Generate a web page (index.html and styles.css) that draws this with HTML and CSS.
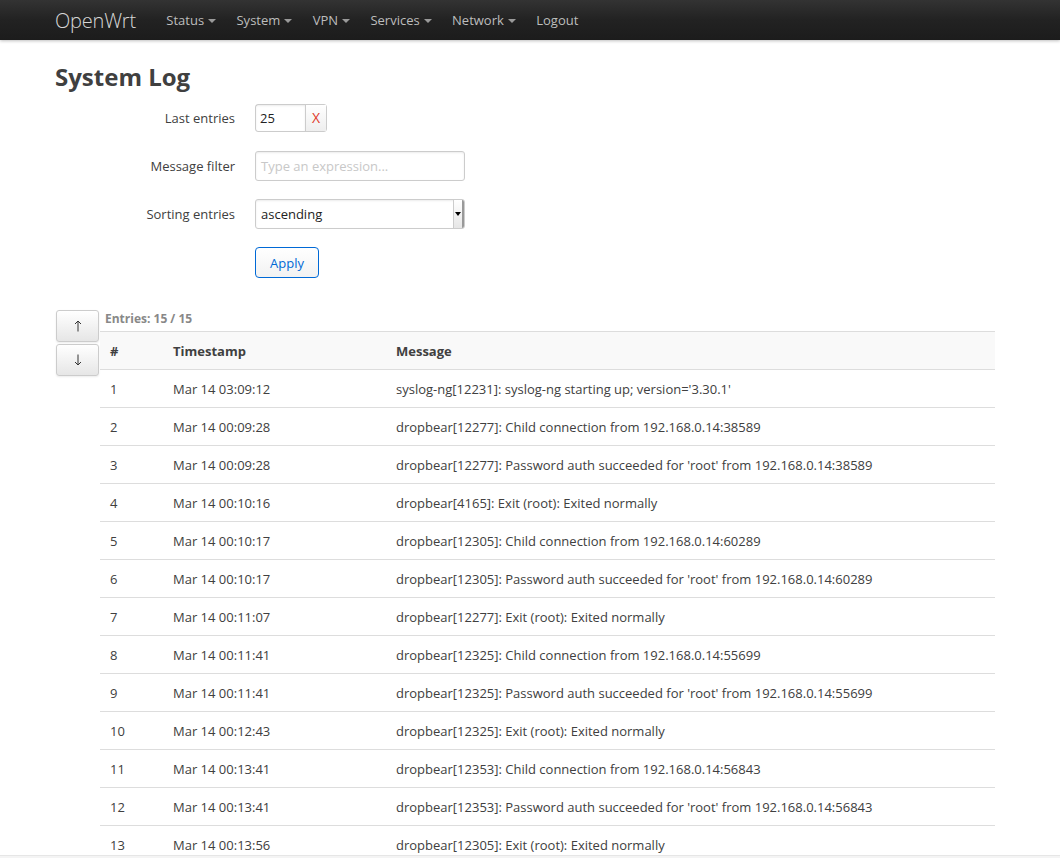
FILE: index.html
```html
<!DOCTYPE html>
<html>
<head>
<meta charset="utf-8">
<link rel="stylesheet" href="styles.css">
</head>
<body>
<header class="navbar">
  <div class="nav-inner">
    <a class="brand">OpenWrt</a>
    <ul class="menu">
      <li class="drop">Status</li>
      <li class="drop">System</li>
      <li class="drop">VPN</li>
      <li class="drop">Services</li>
      <li class="drop">Network</li>
      <li>Logout</li>
    </ul>
  </div>
</header>
<main class="container">
  <h2 class="title">System Log</h2>
  <div class="form">
    <div class="row">
      <label class="lbl">Last entries</label>
      <div class="ctrl">
        <div class="combo"><span class="num">25</span><span class="clear">X</span></div>
      </div>
    </div>
    <div class="row">
      <label class="lbl">Message filter</label>
      <div class="ctrl"><div class="textbox placeholder">Type an expression...</div></div>
    </div>
    <div class="row">
      <label class="lbl">Sorting entries</label>
      <div class="ctrl"><div class="select"><span>ascending</span><span class="sel-btn"><span class="arrow"></span></span></div></div>
    </div>
    <div class="row">
      <span class="lbl"></span>
      <div class="ctrl"><button class="apply">Apply</button></div>
    </div>
  </div>
  <div class="log">
    <div class="scroll-btns">
      <button class="sbtn"><svg width="8" height="12" viewBox="0 0 8 12"><path d="M4 11.5V1M1 4L4 1L7 4" fill="none" stroke="#333" stroke-width="1"/></svg></button>
      <button class="sbtn"><svg width="8" height="12" viewBox="0 0 8 12"><path d="M4 0.5V11M1 8L4 11L7 8" fill="none" stroke="#333" stroke-width="1"/></svg></button>
    </div>
    <div class="tablewrap">
      <div class="count">Entries: 15 / 15</div>
      <table class="tbl">
        <thead><tr><th class="c1">#</th><th class="c2">Timestamp</th><th>Message</th></tr></thead>
        <tbody>
          <tr><td>1</td><td>Mar 14 03:09:12</td><td>syslog-ng[12231]: syslog-ng starting up; version='3.30.1'</td></tr>
          <tr><td>2</td><td>Mar 14 00:09:28</td><td>dropbear[12277]: Child connection from 192.168.0.14:38589</td></tr>
          <tr><td>3</td><td>Mar 14 00:09:28</td><td>dropbear[12277]: Password auth succeeded for 'root' from 192.168.0.14:38589</td></tr>
          <tr><td>4</td><td>Mar 14 00:10:16</td><td>dropbear[4165]: Exit (root): Exited normally</td></tr>
          <tr><td>5</td><td>Mar 14 00:10:17</td><td>dropbear[12305]: Child connection from 192.168.0.14:60289</td></tr>
          <tr><td>6</td><td>Mar 14 00:10:17</td><td>dropbear[12305]: Password auth succeeded for 'root' from 192.168.0.14:60289</td></tr>
          <tr><td>7</td><td>Mar 14 00:11:07</td><td>dropbear[12277]: Exit (root): Exited normally</td></tr>
          <tr><td>8</td><td>Mar 14 00:11:41</td><td>dropbear[12325]: Child connection from 192.168.0.14:55699</td></tr>
          <tr><td>9</td><td>Mar 14 00:11:41</td><td>dropbear[12325]: Password auth succeeded for 'root' from 192.168.0.14:55699</td></tr>
          <tr><td>10</td><td>Mar 14 00:12:43</td><td>dropbear[12325]: Exit (root): Exited normally</td></tr>
          <tr><td>11</td><td>Mar 14 00:13:41</td><td>dropbear[12353]: Child connection from 192.168.0.14:56843</td></tr>
          <tr><td>12</td><td>Mar 14 00:13:41</td><td>dropbear[12353]: Password auth succeeded for 'root' from 192.168.0.14:56843</td></tr>
          <tr><td>13</td><td>Mar 14 00:13:56</td><td>dropbear[12305]: Exit (root): Exited normally</td></tr>
        </tbody>
      </table>
    </div>
  </div>
</main>
<div class="bottom-edge"></div>
</body>
</html>
```
FILE: styles.css
```css
html, body {
  margin: 0;
  padding: 0;
  background: #fff;
  font-family: "Open Sans", "DejaVu Sans", sans-serif;
  font-size: 13px;
  color: #404040;
  overflow: hidden;
  height: 858px;
}
.navbar {
  height: 40px;
  background: linear-gradient(#333, #222 50%, #1c1c1c);
  box-shadow: 0 1px 3px rgba(0,0,0,0.25);
}
.nav-inner {
  display: flex;
  align-items: center;
  height: 40px;
  padding-left: 55px;
}
.brand {
  font-size: 20px;
  font-weight: 300;
  color: #d6d6d6;
  margin-right: 20px;
  letter-spacing: -0.2px;
}
.menu {
  display: flex;
  list-style: none;
  margin: 0;
  padding: 0;
}
.menu li {
  color: #bdbdbd;
  font-size: 13px;
  padding: 0 10px 0 10.4px;
  line-height: 40px;
}
.menu li.drop::after {
  content: "";
  display: inline-block;
  margin-left: 4px;
  vertical-align: middle;
  border-left: 4px solid transparent;
  border-right: 4px solid transparent;
  border-top: 4px solid #9a9a9a;
  position: relative;
  top: -1px;
}
.container {
  padding-left: 55px;
  width: 940px;
}
.title {
  margin: 0;
  padding-top: 22px;
  font-size: 24px;
  line-height: 30px;
  font-weight: 700;
  color: #404040;
  height: 33px;
}
.form {
  display: flex;
  flex-direction: column;
  margin-top: -1px;
}
.row {
  display: flex;
  align-items: center;
  height: 48px;
}
.lbl {
  width: 180px;
  text-align: right;
  margin-right: 20px;
  color: #404040;
}
.combo {
  display: flex;
  height: 28px;
  border: 1px solid #ccc;
  border-radius: 3px;
  width: 72px;
  box-sizing: border-box;
  background: #fff;
}
.num {
  width: 49px;
  padding-left: 4px;
  line-height: 26px;
  box-sizing: border-box;
  color: #222;
  box-shadow: inset 0 1px 2px rgba(0,0,0,0.08);
}
.clear {
  flex: 1;
  border-left: 1px solid #ccc;
  background: linear-gradient(#fff, #eee);
  color: #e0392b;
  text-align: center;
  line-height: 26px;
  font-size: 14px;
}
.textbox, .select {
  width: 210px;
  height: 30px;
  box-sizing: border-box;
  border: 1px solid #ccc;
  border-radius: 3px;
  padding-left: 5px;
  line-height: 28px;
  box-shadow: inset 0 1px 2px rgba(0,0,0,0.08);
}
.placeholder { color: #c8c8c8; }
.select {
  display: flex;
  justify-content: space-between;
  color: #222;
  padding-right: 0;
  overflow: hidden;
}
.sel-btn {
  width: 8px;
  border-left: 1px solid #ccc;
  border-right: 2px solid #999;
  background: linear-gradient(#fff, #e6e6e6);
  display: flex;
  align-items: center;
  justify-content: center;
}
.arrow {
  border-left: 3px solid transparent;
  border-right: 3px solid transparent;
  border-top: 4px solid #000;
}
.apply {
  font-family: inherit;
  font-size: 13px;
  height: 31px;
  width: 64px;
  color: #0069d6;
  background: linear-gradient(#fff, #f2f2f2);
  border: 1px solid #0069d6;
  border-radius: 4px;
  margin-top: 1px;
  padding: 0;
}
.log {
  display: flex;
  margin-top: 24px;
}
.scroll-btns {
  display: flex;
  flex-direction: column;
  gap: 2px;
  width: 45px;
  padding-left: 1px;
  box-sizing: border-box;
}
.sbtn {
  width: 43px;
  height: 32px;
  border: 1px solid #ccc;
  border-radius: 3px;
  background: linear-gradient(#fff, #e6e6e6);
  padding: 0;
  display: flex;
  align-items: center;
  justify-content: center;
  box-shadow: 0 1px 2px rgba(0,0,0,0.08);
}
.tablewrap {
  width: 895px;
}
.count {
  font-size: 12px;
  font-weight: 700;
  color: #888;
  padding-left: 5px;
  height: 21px;
  line-height: 18px;
}
.tbl {
  width: 100%;
  border-collapse: collapse;
}
.tbl th, .tbl td {
  text-align: left;
  padding: 0 10px;
  height: 37px;
  border-top: 1px solid #ddd;
  vertical-align: middle;
}
.tbl th {
  background: #f9f9f9;
  font-weight: 700;
  border-bottom: 1px solid #ddd;
}
.tbl .c1 { width: 43px; }
.tbl .c2 { width: 203px; }
.bottom-edge {
  position: fixed;
  left: 0;
  right: 0;
  bottom: 0;
  height: 2px;
  background: #f4f4f4;
  border-top: 1px solid #e6e6e6;
}
```
